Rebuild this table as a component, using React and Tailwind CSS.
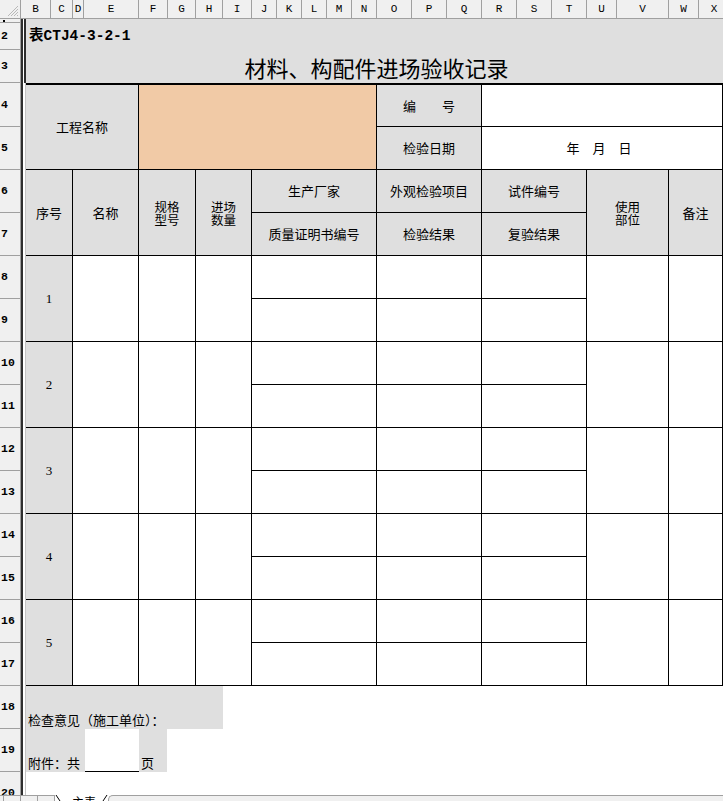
import React from "react";

const cols = [
  ["B", 30], ["C", 22], ["D", 11], ["E", 55], ["F", 29], ["G", 28], ["H", 27], ["I", 29],
  ["J", 25], ["K", 25], ["L", 25], ["M", 25], ["N", 25], ["O", 35], ["P", 35], ["Q", 35],
  ["R", 35], ["S", 35], ["T", 35], ["U", 30], ["V", 52], ["W", 30], ["X", 31],
];

const rowHeads = [
  ["", 4], ["2", 27], ["3", 33], ["4", 44],
  ...Array.from({ length: 16 }, (_, i) => [String(i + 5), 43]),
];

const cell = "flex items-center justify-center text-center border-r border-b border-black";
const grey = "bg-[#dfdfdf]";

function Stack({ a, b }) {
  return (
    <div className="flex flex-col text-[12.5px] leading-[13px]">
      <span>{a}</span>
      <span>{b}</span>
    </div>
  );
}

function DataGroup({ n }) {
  return (
    <>
      <div className={`${cell} ${grey} row-span-2 font-['Liberation_Serif',serif] text-[13px]`}>{n}</div>
      <div className={`${cell} row-span-2`} />
      <div className={`${cell} row-span-2`} />
      <div className={`${cell} row-span-2`} />
      <div className={cell} />
      <div className={cell} />
      <div className={cell} />
      <div className={`${cell} row-span-2`} />
      <div className={`${cell} row-span-2`} />
      <div className={cell} />
      <div className={cell} />
      <div className={cell} />
    </>
  );
}

export default function App() {
  return (
    <div className="w-[723px] h-[801px] overflow-hidden bg-white flex flex-col font-['Noto_Sans_CJK_SC','Liberation_Sans',sans-serif] text-black">
      {/* column headers */}
      <div className="flex h-[19px] shrink-0 bg-[#f0f0f0] border-b border-[#a0a0a0]">
        <div className="w-[21px] shrink-0 border-r border-[#a0a0a0] relative">
          <svg className="absolute right-[1px] bottom-[1px]" width="12" height="12" viewBox="0 0 12 12">
            <path d="M11 1 L1 11 M11 4 L4 11 M11 7 L7 11 M11 10 L10 11" stroke="#b8b8b8" strokeWidth="1" />
          </svg>
        </div>
        {cols.map(([c, w]) => (
          <div
            key={c}
            style={{ width: w }}
            className="shrink-0 border-r border-[#a0a0a0] flex items-center justify-center font-['Liberation_Mono',monospace] text-[11px] leading-none"
          >
            {c}
          </div>
        ))}
      </div>

      <div className="flex h-[776px] shrink-0 overflow-hidden">
        {/* row headers */}
        <div className="w-[21px] shrink-0 flex flex-col bg-[#f0f0f0] border-r border-[#a0a0a0]">
          {rowHeads.map(([r, h], i) => (
            <div
              key={i}
              style={{ height: h }}
              className="shrink-0 border-b border-[#a0a0a0] flex items-center pl-[1px] font-['Liberation_Mono',monospace] font-bold text-[11.5px] leading-none relative"
            >
              {i === 0 ? <span className="absolute left-[3px] top-[1px] w-[2px] h-[2px] bg-black" /> : r}
            </div>
          ))}
        </div>

        {/* frozen pane divider */}
        <div className="w-[5px] shrink-0 flex">
          <div className="w-[2px] bg-[#2e2e2e]" />
          <div className="w-[1px] bg-white" />
          <div className="w-[2px] flex flex-col">
            <div className="h-[64px] bg-[#2e2e2e]" />
            <div className="flex-1 flex">
              <div className="w-[1px] bg-white" />
              <div className="w-[1px] bg-[#c4c4c4]" />
            </div>
          </div>
        </div>

        {/* sheet content */}
        <div className="flex-1 flex flex-col min-w-0">
          <div className={`${grey} h-[64px] shrink-0 flex flex-col`}>
            <div className="h-[4px]" />
            <div className="h-[27px] flex items-center pl-[3px] font-['Liberation_Mono','Noto_Sans_CJK_SC',monospace] font-bold text-[14.5px]">
              表CTJ4-3-2-1
            </div>
            <div className="h-[33px] flex items-center justify-center pl-[4px] text-[22px] leading-none">
              材料、构配件进场验收记录
            </div>
          </div>

          <div className="grid shrink-0 border-t-2 border-black grid-cols-[47px_66px_57px_56px_125px_105px_105px_82px_54px] grid-rows-[42px_repeat(13,43px)] text-[13px]">
            <div className={`${cell} ${grey} col-span-2 row-span-2`}>工程名称</div>
            <div className={`${cell} bg-[#f1caa6] col-span-3 row-span-2`} />
            <div className={`${cell} ${grey}`}>编　　号</div>
            <div className={`${cell} col-span-3`} />
            <div className={`${cell} ${grey}`}>检验日期</div>
            <div className={`${cell} col-span-3 pr-[6px]`}>年　月　日</div>

            <div className={`${cell} ${grey} row-span-2`}>序号</div>
            <div className={`${cell} ${grey} row-span-2`}>名称</div>
            <div className={`${cell} ${grey} row-span-2`}><Stack a="规格" b="型号" /></div>
            <div className={`${cell} ${grey} row-span-2`}><Stack a="进场" b="数量" /></div>
            <div className={`${cell} ${grey}`}>生产厂家</div>
            <div className={`${cell} ${grey}`}>外观检验项目</div>
            <div className={`${cell} ${grey}`}>试件编号</div>
            <div className={`${cell} ${grey} row-span-2`}><Stack a="使用" b="部位" /></div>
            <div className={`${cell} ${grey} row-span-2`}>备注</div>
            <div className={`${cell} ${grey}`}>质量证明书编号</div>
            <div className={`${cell} ${grey}`}>检验结果</div>
            <div className={`${cell} ${grey}`}>复验结果</div>

            {[1, 2, 3, 4, 5].map((n) => (
              <DataGroup key={n} n={n} />
            ))}
          </div>

          <div className="h-[43px] shrink-0 flex text-[13px]">
            <div className={`${grey} w-[197px] flex items-end pb-0 pl-[2px]`}>检查意见（施工单位）：</div>
          </div>
          <div className="h-[43px] shrink-0 flex text-[13px]">
            <div className={`${grey} w-[59px] flex items-end pb-0 pl-[2px]`}>附件：共</div>
            <div className="w-[54px] border-b border-black" />
            <div className={`${grey} w-[28px] flex items-end pb-0 pl-[2px]`}>页</div>
          </div>
          <div className="h-[43px] shrink-0" />
        </div>
      </div>

      {/* sheet tabs */}
      <div className="h-[6px] shrink-0 flex overflow-hidden">
        <div className="w-[55px] shrink-0 flex bg-[#f0f0f0] border-t border-[#a0a0a0]">
          <div className="w-[4px] border-r border-[#a0a0a0]" />
          <div className="w-[17px] border-r border-[#a0a0a0]" />
          <div className="w-[17px] border-r border-[#a0a0a0]" />
          <div className="w-[17px] border-r border-[#a0a0a0]" />
        </div>
        <div className="w-[53px] shrink-0 relative bg-white">
          <svg className="absolute left-0 top-0" width="53" height="6" viewBox="0 0 53 6">
            <path d="M1 0 L5 6" stroke="#000" strokeWidth="1" />
            <path d="M52 0 L48 6" stroke="#000" strokeWidth="1" />
          </svg>
          <div className="absolute left-[17px] top-[1px] text-[12px] leading-none">主表</div>
        </div>
        <div className="flex-1 bg-[#f0f0f0] border-t border-l border-[#a0a0a0] rounded-tl-[5px]" />
      </div>
    </div>
  );
}
